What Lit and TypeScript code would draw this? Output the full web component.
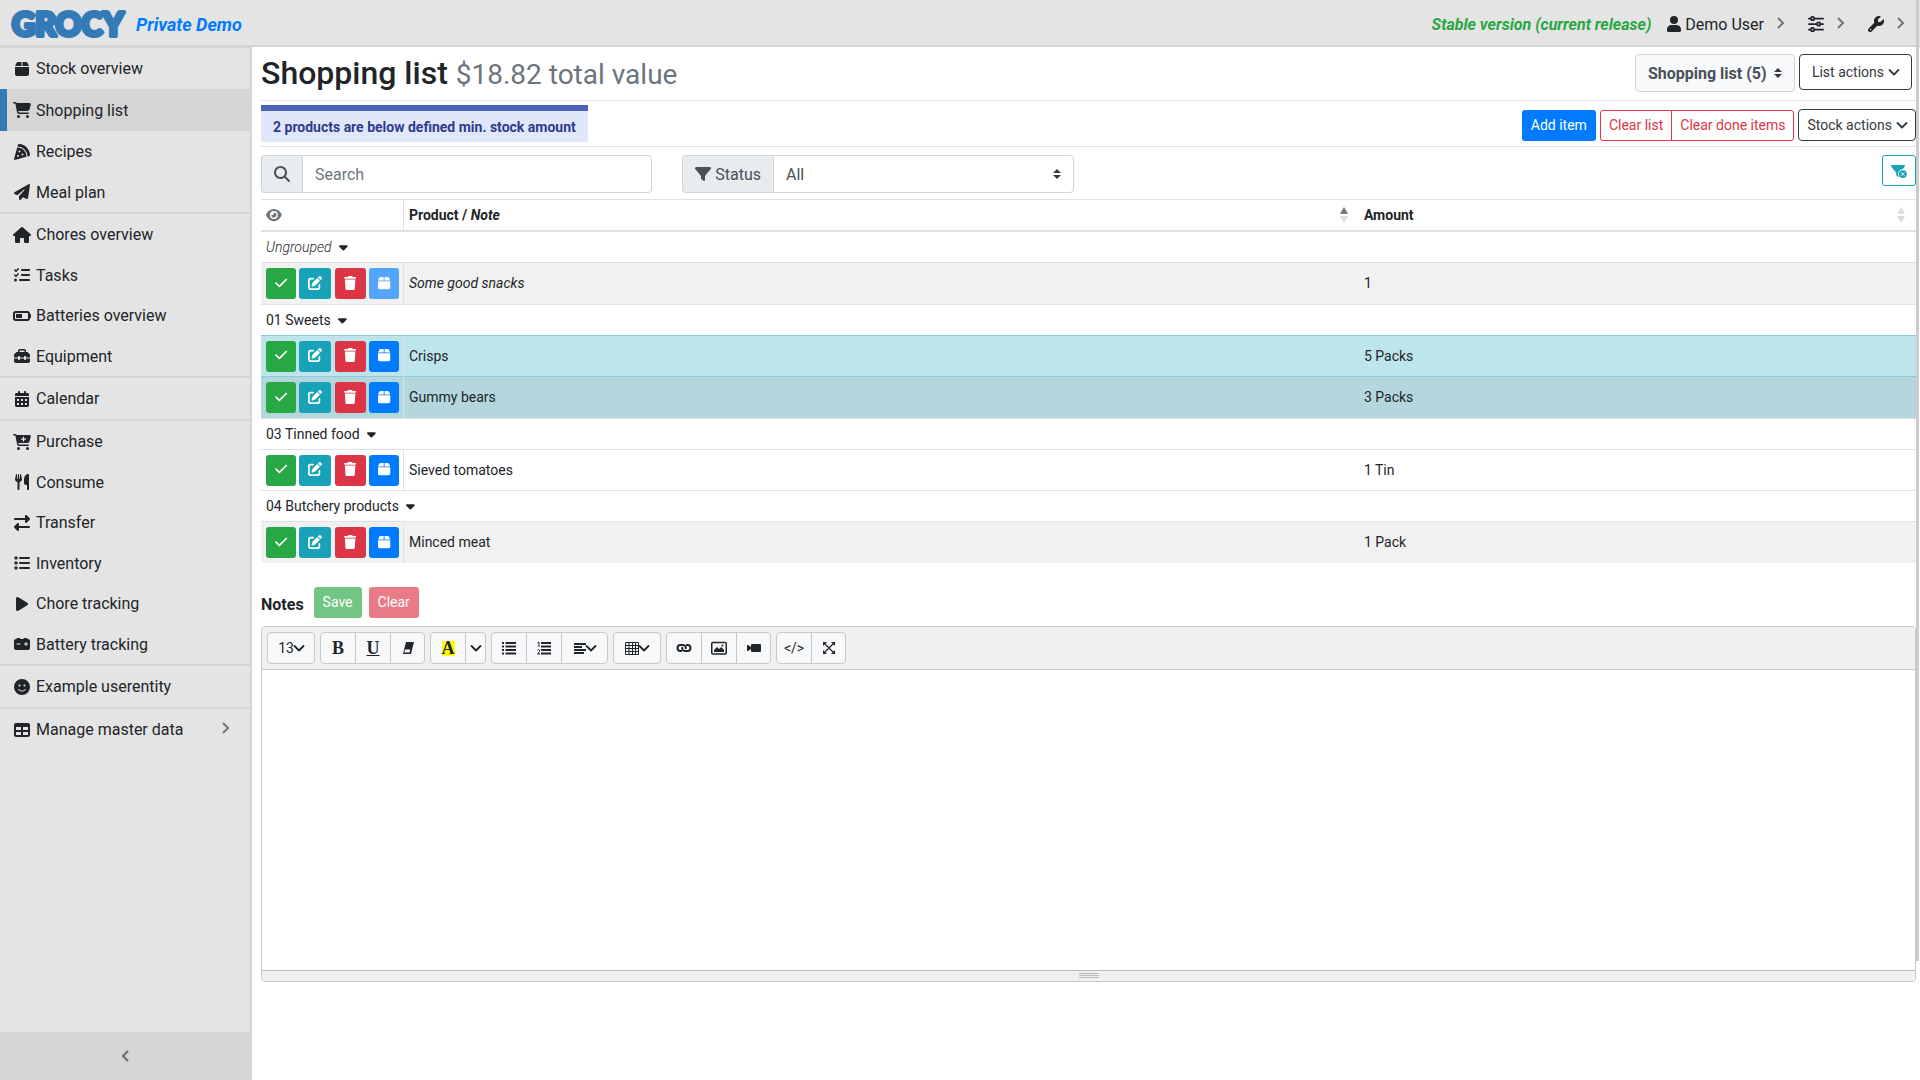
import { LitElement, html, css, svg, nothing } from "lit";
import type { SVGTemplateResult } from "lit";
import { customElement, property } from "lit/decorators.js";
import { classMap } from "lit/directives/class-map.js";

interface Icon {
  w: number;
  h?: number;
  body: SVGTemplateResult;
}

const CART =
  "M0 24C0 10.7 10.7 0 24 0H69.5c22 0 41.5 12.8 50.6 32h411c26.3 0 45.5 25 38.6 50.4l-41 152.3c-8.5 31.4-37 53.3-69.5 53.3H170.7l5.4 28.5c2.2 11.3 12.1 19.5 23.6 19.5H488c13.3 0 24 10.7 24 24s-10.7 24-24 24H199.7c-34.6 0-64.3-24.6-70.7-58.5L77.4 54.5c-.7-3.8-4-6.5-7.9-6.5H24C10.7 48 0 37.3 0 24zM128 464a48 48 0 1 1 96 0 48 48 0 1 1 -96 0zm336-48a48 48 0 1 1 0 96 48 48 0 1 1 0-96z";
const FILTER =
  "M3.9 54.9C10.5 40.9 24.5 32 40 32H472c15.5 0 29.5 8.9 36.1 22.9s4.6 30.5-5.2 42.5L320 320.9V448c0 12.1-6.8 23.2-17.7 28.6s-23.8 4.3-33.5-3l-64-48c-8.1-6-12.8-15.5-12.8-25.6V320.9L9 97.3C-.7 85.4-2.8 68.8 3.9 54.9z";

const ICONS: Record<string, Icon> = {
  box: {
    w: 448,
    body: svg`<path d="M50.7 58.5L0 160H208V32H93.7C75.5 32 58.9 42.3 50.7 58.5zM240 160H448L397.3 58.5C389.2 42.3 372.5 32 354.3 32H240V160zm208 32H0V416c0 35.3 28.7 64 64 64H384c35.3 0 64-28.7 64-64V192z"/>`,
  },
  cart: { w: 576, body: svg`<path d=${CART} />` },
  cartPlus: {
    w: 576,
    body: svg`<path fill-rule="evenodd" d=${CART + "M252 160c0 11 9 20 20 20h44v44c0 11 9 20 20 20s20-9 20-20V180h44c11 0 20-9 20-20s-9-20-20-20H356V96c0-11-9-20-20-20s-20 9-20 20v44H272c-11 0-20 9-20 20z"} />`,
  },
  pizza: {
    w: 512,
    body: svg`<path fill-rule="evenodd" d="M169.7 .9c-22.8-1.6-41.9 14-47.5 34.7L110.4 80c.5 0 1.1 0 1.6 0c176.7 0 320 143.3 320 320c0 .5 0 1.1 0 1.6l44.4-11.8c20.8-5.5 36.3-24.7 34.7-47.5C498.5 159.5 352.5 13.5 169.7 .9zM399.8 410.2c.1-3.4 .2-6.8 .2-10.2c0-159.1-128.9-288-288-288c-3.4 0-6.8 .1-10.2 .2L.5 491.9c-1.5 5.5 .1 11.4 4.1 15.4s9.9 5.6 15.4 4.1L399.8 410.2zM176 208a32 32 0 1 1 0 64 32 32 0 1 1 0-64zm64 128a32 32 0 1 1 64 0 32 32 0 1 1 -64 0zM96 384a32 32 0 1 1 64 0 32 32 0 1 1 -64 0z"/>`,
  },
  plane: {
    w: 512,
    body: svg`<path d="M498.1 5.6c10.1 7 15.4 19.1 13.5 31.2l-64 416c-1.5 9.7-7.4 18.2-16 23s-18.9 5.4-28 1.6L284 427.7l-68.5 74.1c-8.9 9.7-22.9 12.9-35.2 8.1S160 493.2 160 480V396.4c0-4 1.5-7.8 4.2-10.7L331.8 202.8c5.8-6.3 5.6-16-.4-22s-15.7-6.4-22-.7L106 360.8 17.7 316.6C7.1 311.3 .3 300.7 0 288.9s5.9-22.8 16.1-28.7l448-256c10.7-6.1 23.9-5.5 34 1.4z"/>`,
  },
  house: {
    w: 576,
    body: svg`<path d="M575.8 255.5c0 18-15 32.1-32 32.1h-32l.7 160.2c0 2.7-.2 5.4-.5 8.1V472c0 22.1-17.9 40-40 40H456c-1.1 0-2.2 0-3.3-.1c-1.4 .1-2.8 .1-4.2 .1H416 392c-22.1 0-40-17.9-40-40V448 384c0-17.7-14.3-32-32-32H256c-17.7 0-32 14.3-32 32v64 24c0 22.1-17.9 40-40 40H160 128.1c-1.5 0-3-.1-4.5-.2c-1.2 .1-2.4 .2-3.6 .2H104c-22.1 0-40-17.9-40-40V360c0-.9 0-1.9 .1-2.8V287.6H32c-18 0-32-14-32-32.1c0-9 3-17 10-24L266.4 8c7-7 15-8 22-8s15 2 21 7L564.8 231.5c8 7 12 15 11 24z"/>`,
  },
  tasks: {
    w: 512,
    body: svg`<path d="M152.1 38.2c9.9 8.9 10.7 24 1.8 33.9l-72 80c-4.4 4.9-10.6 7.8-17.2 7.9s-12.9-2.4-17.6-7L7 113C-2.3 103.6-2.3 88.4 7 79s24.6-9.4 33.9 0l22.1 22.1 55.1-61.2c8.9-9.9 24-10.7 33.9-1.8zm0 160c9.9 8.9 10.7 24 1.8 33.9l-72 80c-4.4 4.9-10.6 7.8-17.2 7.9s-12.9-2.4-17.6-7L7 273c-9.4-9.4-9.4-24.6 0-33.9s24.6-9.4 33.9 0l22.1 22.1 55.1-61.2c8.9-9.9 24-10.7 33.9-1.8zM224 96c0-17.7 14.3-32 32-32H480c17.7 0 32 14.3 32 32s-14.3 32-32 32H256c-17.7 0-32-14.3-32-32zm0 160c0-17.7 14.3-32 32-32H480c17.7 0 32 14.3 32 32s-14.3 32-32 32H256c-17.7 0-32-14.3-32-32zM160 416c0-17.7 14.3-32 32-32H480c17.7 0 32 14.3 32 32s-14.3 32-32 32H192c-17.7 0-32-14.3-32-32zM48 368a48 48 0 1 1 0 96 48 48 0 1 1 0-96z"/>`,
  },
  batteryHalf: {
    w: 576,
    body: svg`<path fill-rule="evenodd" d="M464 160c8.8 0 16 7.2 16 16V336c0 8.8-7.2 16-16 16H80c-8.8 0-16-7.2-16-16V176c0-8.8 7.2-16 16-16H464zM80 96C35.8 96 0 131.8 0 176V336c0 44.2 35.8 80 80 80H464c44.2 0 80-35.8 80-80V320c17.7 0 32-14.3 32-32V224c0-17.7-14.3-32-32-32V176c0-44.2-35.8-80-80-80H80zm208 96H96V320H288V192z"/>`,
  },
  toolbox: {
    w: 512,
    body: svg`<path d="M176 88v40H336V88c0-4.4-3.6-8-8-8H184c-4.4 0-8 3.6-8 8zm-48 40V88c0-30.9 25.1-56 56-56H328c30.9 0 56 25.1 56 56v40h28.1c12.7 0 24.9 5.1 33.9 14.1l51.9 51.9c9 9 14.1 21.2 14.1 33.9V304H384V288c0-17.7-14.3-32-32-32s-32 14.3-32 32v16H192V288c0-17.7-14.3-32-32-32s-32 14.3-32 32v16H0V227.9c0-12.7 5.1-24.9 14.1-33.9l51.9-51.9c9-9 21.2-14.1 33.9-14.1H128zM0 416V336H128v16c0 17.7 14.3 32 32 32s32-14.3 32-32V336H320v16c0 17.7 14.3 32 32 32s32-14.3 32-32V336H512v80c0 35.3-28.7 64-64 64H64c-35.3 0-64-28.7-64-64z"/>`,
  },
  calendar: {
    w: 448,
    body: svg`<path fill-rule="evenodd" d="M128 0c17.7 0 32 14.3 32 32V64H288V32c0-17.7 14.3-32 32-32s32 14.3 32 32V64h48c26.5 0 48 21.5 48 48v48H0V112C0 85.5 21.5 64 48 64H96V32c0-17.7 14.3-32 32-32zM0 192H448V464c0 26.5-21.5 48-48 48H48c-26.5 0-48-21.5-48-48V192zM64 256v64h64v-64zM192 256v64h64v-64zM320 256v64h64v-64zM64 384v64h64v-64zM192 384v64h64v-64zM320 384v64h64v-64z"/>`,
  },
  utensils: {
    w: 448,
    body: svg`<path d="M416 0C400 0 288 32 288 176V288c0 35.3 28.7 64 64 64h32V480c0 17.7 14.3 32 32 32s32-14.3 32-32V352 240 32c0-17.7-14.3-32-32-32zM64 16C64 7.8 57.9 1 49.7 .1S34.2 4.6 32.4 12.5L2.1 148.8C.7 155.1 0 161.5 0 167.9c0 45.9 35.1 83.6 80 87.7V480c0 17.7 14.3 32 32 32s32-14.3 32-32V255.6c44.9-4.1 80-41.8 80-87.7c0-6.4-.7-12.8-2.1-19.1L191.6 12.5c-1.8-8-9.3-13.3-17.4-12.4S160 7.8 160 16V150.2c0 5.4-4.4 9.8-9.8 9.8c-5.1 0-9.3-3.9-9.8-9L127.9 14.6C127.2 6.3 120.3 0 112 0s-15.2 6.3-15.9 14.6L83.7 151c-.5 5.1-4.7 9-9.8 9c-5.4 0-9.8-4.4-9.8-9.8V16z"/>`,
  },
  transfer: {
    w: 512,
    body: svg`<path d="M32 96l320 0V32c0-12.9 7.8-24.6 19.8-29.6s25.7-2.2 34.9 6.9l96 96c6 6 9.4 14.1 9.4 22.6s-3.4 16.6-9.4 22.6l-96 96c-9.2 9.2-22.9 11.9-34.9 6.9s-19.8-16.6-19.8-29.6V160L32 160c-17.7 0-32-14.3-32-32s14.3-32 32-32zM480 352c17.7 0 32 14.3 32 32s-14.3 32-32 32H160v64c0 12.9-7.8 24.6-19.8 29.6s-25.7 2.2-34.9-6.9l-96-96c-6-6-9.4-14.1-9.4-22.6s3.4-16.6 9.4-22.6l96-96c9.2-9.2 22.9-11.9 34.9-6.9s19.8 16.6 19.8 29.6l0 64H480z"/>`,
  },
  list: {
    w: 512,
    body: svg`<rect x="16" y="48" width="96" height="96" rx="24"/><rect x="16" y="208" width="96" height="96" rx="24"/><rect x="16" y="368" width="96" height="96" rx="24"/><rect x="160" y="64" width="352" height="64" rx="32"/><rect x="160" y="224" width="352" height="64" rx="32"/><rect x="160" y="384" width="352" height="64" rx="32"/>`,
  },
  play: {
    w: 384,
    body: svg`<path d="M73 39c-14.8-9.1-33.4-9.4-48.5-.9S0 62.6 0 80V432c0 17.4 9.4 33.4 24.5 41.9s33.7 8.1 48.5-.9L361 297c14.3-8.7 23-24.2 23-41s-8.7-32.2-23-41L73 39z"/>`,
  },
  carBattery: {
    w: 512,
    body: svg`<path fill-rule="evenodd" d="M80 96c0-17.700 14.300-32 32-32h64c17.700 0 32 14.300 32 32h96c0-17.700 14.300-32 32-32h64c17.700 0 32 14.300 32 32h16c35.300 0 64 28.700 64 64V384c0 35.300-28.700 64-64 64H64c-35.300 0-64-28.700-64-64V160c0-35.300 28.700-64 64-64H80zM368 192v48h-48v32h48v48h32v-48h48v-32h-48v-48zM80 240v32h128v-32z"/>`,
  },
  smile: {
    w: 512,
    body: svg`<path fill-rule="evenodd" d="M256 512A256 256 0 1 0 256 0a256 256 0 1 0 0 512zM164.100 325.500C182 346.200 212.600 368 256 368s74-21.800 91.900-42.500c5.800-6.700 15.900-7.400 22.600-1.600s7.400 15.900 1.600 22.600C349.800 372.100 311.100 400 256 400s-93.800-27.900-116.100-53.500c-5.800-6.700-5.100-16.800 1.600-22.600s16.800-5.100 22.600 1.600zM144 208a32 32 0 1 1 64 0 32 32 0 1 1 -64 0zm192-32a32 32 0 1 1 0 64 32 32 0 1 1 0-64z"/>`,
  },
  table: {
    w: 512,
    body: svg`<path fill-rule="evenodd" d="M64 32H448c35.300 0 64 28.700 64 64V416c0 35.300-28.700 64-64 64H64c-35.300 0-64-28.700-64-64V96C0 60.700 28.700 32 64 32zM64 160V256H224V160zM288 160V256H448V160zM64 320V416H224V320zM288 320V416H448V320z"/>`,
  },
  user: {
    w: 448,
    body: svg`<path d="M224 256A128 128 0 1 0 224 0a128 128 0 1 0 0 256zM150 288C60 288 0 340 0 420V464c0 26.500 21.500 48 48 48H400c26.500 0 48-21.500 48-48V420c0-80-60-132-150-132z"/>`,
  },
  sliders: {
    w: 512,
    body: svg`<g fill="none" stroke="currentColor" stroke-width="56" stroke-linecap="round"><path d="M28 80H72M224 80H484M28 256H262M424 256H484M28 432H72M224 432H484"/><circle cx="144" cy="80" r="54"/><circle cx="342" cy="256" r="54"/><circle cx="144" cy="432" r="54"/></g>`,
  },
  wrench: {
    w: 512,
    body: svg`<path fill-rule="evenodd" d="M352 320c88.400 0 160-71.600 160-160c0-15.300-2.200-30.100-6.200-44.200c-3.100-10.800-16.400-13.200-24.300-5.300l-76.800 76.800c-3 3-7.100 4.700-11.300 4.700H336c-8.800 0-16-7.200-16-16V118.600c0-4.200 1.700-8.300 4.700-11.300l76.800-76.800c7.900-7.900 5.400-21.200-5.300-24.300C382.100 2.200 367.300 0 352 0C263.600 0 192 71.600 192 160c0 19.100 3.400 37.500 9.500 54.500L19.900 396.100C7.200 408.800 0 426.100 0 444.100C0 481.600 30.400 512 67.900 512c18 0 35.300-7.200 48-19.900L297.500 310.500c17 6.200 35.400 9.500 54.500 9.500zM80 408a24 24 0 1 1 0 48 24 24 0 1 1 0-48z"/>`,
  },
  search: {
    w: 512,
    body: svg`<path fill-rule="evenodd" d="M416 208c0 45.900-14.900 88.300-40 122.700L502.600 457.400c12.500 12.500 12.500 32.800 0 45.300s-32.800 12.500-45.300 0L330.700 376c-34.400 25.200-76.800 40-122.700 40C93.100 416 0 322.900 0 208S93.100 0 208 0S416 93.100 416 208zM208 352a144 144 0 1 0 0-288 144 144 0 1 0 0 288z"/>`,
  },
  eye: {
    w: 576,
    body: svg`<path fill-rule="evenodd" d="M288 32c-80.800 0-145.500 36.800-192.600 80.600C48.600 156 17.300 208 2.500 243.700c-3.300 7.900-3.300 16.700 0 24.600C17.300 304 48.600 356 95.400 399.400C142.500 443.200 207.200 480 288 480s145.500-36.800 192.600-80.600c46.800-43.500 78.100-95.400 93-131.100c3.300-7.900 3.300-16.700 0-24.600c-14.900-35.700-46.200-87.700-93-131.100C433.500 68.800 368.800 32 288 32zM144 256a144 144 0 1 1 288 0 144 144 0 1 1 -288 0zm144-64c0 35.300-28.700 64-64 64c-7.100 0-13.900-1.200-20.300-3.300c-5.500-1.800-11.900 1.600-11.700 7.400c.3 6.900 1.300 13.800 3.200 20.700c13.700 51.200 66.400 81.600 117.600 67.900s81.600-66.400 67.900-117.600c-11.100-41.500-47.800-69.400-88.600-71.100c-5.800-.2-9.200 6.100-7.400 11.700c2.100 6.400 3.300 13.200 3.300 20.300z"/>`,
  },
  filter: { w: 512, body: svg`<path d=${FILTER} />` },
  filterClear: {
    w: 576,
    body: svg`<path d=${FILTER} /><circle cx="432" cy="368" r="176" fill="#fff"/><circle cx="432" cy="368" r="144"/><path d="M382 318l100 100M482 318l-100 100" stroke="#fff" stroke-width="34" stroke-linecap="round"/>`,
  },
  check: {
    w: 448,
    body: svg`<path d="M438.600 105.400c12.500 12.500 12.500 32.800 0 45.300l-256 256c-12.500 12.500-32.800 12.500-45.300 0l-128-128c-12.500-12.500-12.500-32.800 0-45.300s32.800-12.500 45.300 0L160 338.700 393.400 105.400c12.500-12.500 32.800-12.500 45.300 0z"/>`,
  },
  edit: {
    w: 512,
    body: svg`<path d="M471.600 21.700c-21.900-21.900-57.300-21.900-79.200 0L362.300 51.700l97.900 97.900 30.100-30.100c21.900-21.900 21.900-57.300 0-79.200L471.600 21.700zm-299.200 220c-6.100 6.100-10.800 13.600-13.500 21.900l-29.600 88.800c-2.900 8.600-.6 18.100 5.800 24.600s15.900 8.700 24.600 5.800l88.800-29.600c8.200-2.700 15.700-7.400 21.900-13.500L437.700 172.300 339.700 74.300 172.400 241.700zM96 64C43 64 0 107 0 160V416c0 53 43 96 96 96H352c53 0 96-43 96-96V320c0-17.700-14.300-32-32-32s-32 14.300-32 32v96c0 17.700-14.300 32-32 32H96c-17.700 0-32-14.300-32-32V160c0-17.700 14.300-32 32-32h96c17.700 0 32-14.300 32-32s-14.300-32-32-32H96z"/>`,
  },
  trash: {
    w: 448,
    body: svg`<path d="M135.200 17.700L128 32H32C14.300 32 0 46.300 0 64S14.300 96 32 96H416c17.700 0 32-14.300 32-32s-14.300-32-32-32H320l-7.200-14.300C307.400 6.800 296.300 0 284.200 0H163.800c-12.100 0-23.200 6.800-28.600 17.700zM416 128H32L53.200 467c1.600 25.300 22.600 45 47.900 45H346.900c25.300 0 46.300-19.700 47.900-45L416 128z"/>`,
  },
  caretDown: {
    w: 320,
    body: svg`<path d="M137.400 374.600c12.500 12.500 32.800 12.500 45.300 0l128-128c9.200-9.200 11.900-22.900 6.900-34.900s-16.600-19.800-29.600-19.800L32 192c-12.900 0-24.600 7.800-29.600 19.800s-2.200 25.700 6.900 34.900l128 128z"/>`,
  },
  chevronRight: {
    w: 8,
    h: 14,
    body: svg`<path d="M1 2l5 5-5 5" fill="none" stroke="currentColor" stroke-width="2"/>`,
  },
  chevronLeft: {
    w: 8,
    h: 14,
    body: svg`<path d="M7 2L2 7l5 5" fill="none" stroke="currentColor" stroke-width="2"/>`,
  },
  chevronDown: {
    w: 10,
    h: 14,
    body: svg`<path d="M.5 5L5 9.500 9.500 5" fill="none" stroke="currentColor" stroke-width="1.800" stroke-linecap="round" stroke-linejoin="round"/>`,
  },
  eraser: {
    w: 14,
    h: 14,
    body: svg`<path fill-rule="evenodd" d="M5 1h8L10 13H2zM4 8.500L3.300 11.500h5.200l.8-3z"/>`,
  },
  ul: {
    w: 14,
    h: 14,
    body: svg`<path d="M0 1h2v2H0zM0 4.500h2v2H0zM0 8h2v2H0zM0 11.500h2v2H0zM3.500 1H14v2H3.500zM3.500 4.500H14v2H3.500zM3.500 8H14v2H3.500zM3.500 11.500H14v2H3.500z"/>`,
  },
  ol: {
    w: 14,
    h: 14,
    body: svg`<path d="M4 1h10v2H4zM4 4.500h10v2H4zM4 8h10v2H4zM4 11.500h10v2H4z"/><path d="M.5 2L2 1v5M.5 9q1-1 2 0t-2 4h2.500" fill="none" stroke="currentColor"/>`,
  },
  align: {
    w: 12,
    h: 14,
    body: svg`<path d="M0 2h12v2H0zM0 5h8v2H0zM0 8h12v2H0zM0 11h10v2H0z"/>`,
  },
  grid: {
    w: 14,
    h: 14,
    body: svg`<path d="M.5 1.500h13v12H.5zM.5 4.500h13M.5 7.500h13M.5 10.500h13M4 1.500v12M7.500 1.500v12M10.500 1.500v12" fill="none" stroke="currentColor"/>`,
  },
  link: {
    w: 16,
    h: 14,
    body: svg`<g fill="none" stroke="currentColor" stroke-width="2"><path d="M6 10H4.500a3 3 0 0 1 0-6H7a2.800 2.800 0 0 1 2.500 4"/><path d="M10 4h1.500a3 3 0 0 1 0 6H9a2.800 2.800 0 0 1-2.500-4"/></g>`,
  },
  picture: {
    w: 16,
    h: 14,
    body: svg`<rect x=".75" y="1.500" width="14.500" height="11.500" rx="1" fill="none" stroke="currentColor" stroke-width="1.500"/><path d="M3 11V9l3-3 2 2 2.500-2L13 9v2z"/><circle cx="11.500" cy="4.500" r="1"/>`,
  },
  video: {
    w: 16,
    h: 14,
    body: svg`<rect x="5" y="3" width="10" height="8" rx="1"/><path d="M1 4h1l3 2v2L2 10H1z"/>`,
  },
  expand: {
    w: 14,
    h: 14,
    body: svg`<path d="M1 1h4L1 5zM13 1v4L9 1zM1 13V9l4 4zM13 13H9l4-4z"/><path d="M2 2l10 10M12 2L2 12" stroke="currentColor" stroke-width="1.200"/>`,
  },
};

@customElement("app-icon")
export class AppIcon extends LitElement {
  @property() name = "";
  @property({ type: Number }) size = 16;

  static styles = css`
    :host {
      display: inline-flex;
      flex: none;
    }
    .glyph {
      display: block;
      fill: currentColor;
      overflow: visible;
    }
  `;

  render() {
    const icon = ICONS[this.name];
    if (!icon) return nothing;
    const h = icon.h ?? 512;
    return html`<svg class="glyph" aria-hidden="true" viewBox="0 0 ${icon.w} ${h}" height=${this.size} width=${(this.size * icon.w) / h}>${icon.body}</svg>`;
  }
}

interface NavItem {
  icon: string;
  label: string;
  active?: boolean;
  more?: boolean;
}

const NAV: NavItem[][] = [
  [
    { icon: "box", label: "Stock overview" },
    { icon: "cart", label: "Shopping list", active: true },
    { icon: "pizza", label: "Recipes" },
    { icon: "plane", label: "Meal plan" },
  ],
  [
    { icon: "house", label: "Chores overview" },
    { icon: "tasks", label: "Tasks" },
    { icon: "batteryHalf", label: "Batteries overview" },
    { icon: "toolbox", label: "Equipment" },
  ],
  [{ icon: "calendar", label: "Calendar" }],
  [
    { icon: "cartPlus", label: "Purchase" },
    { icon: "utensils", label: "Consume" },
    { icon: "transfer", label: "Transfer" },
    { icon: "list", label: "Inventory" },
    { icon: "play", label: "Chore tracking" },
    { icon: "carBattery", label: "Battery tracking" },
  ],
  [{ icon: "smile", label: "Example userentity" }],
  [{ icon: "table", label: "Manage master data", more: true }],
];

interface Item {
  name: string;
  amount: string;
  low?: boolean;
  shade?: boolean;
  note?: boolean;
}

const GROUPS: { label: string; note?: boolean; items: Item[] }[] = [
  { label: "Ungrouped", note: true, items: [{ name: "Some good snacks", amount: "1", note: true, shade: true }] },
  {
    label: "01 Sweets",
    items: [
      { name: "Crisps", amount: "5 Packs", low: true },
      { name: "Gummy bears", amount: "3 Packs", low: true, shade: true },
    ],
  },
  { label: "03 Tinned food", items: [{ name: "Sieved tomatoes", amount: "1 Tin" }] },
  { label: "04 Butchery products", items: [{ name: "Minced meat", amount: "1 Pack", shade: true }] },
];

const icon = (name: string, size = 16) => html`<app-icon name=${name} size=${size}></app-icon>`;

@customElement("app-root")
export class AppRoot extends LitElement {
  static styles = css`
    :host {
      display: block;
      font: 14px/21px Roboto, "Liberation Sans", sans-serif;
      color: #212529;
    }
    *,
    *::before,
    *::after {
      box-sizing: border-box;
    }
    button,
    input,
    select,
    textarea {
      font: inherit;
      color: inherit;
      margin: 0;
    }
    a {
      color: inherit;
      text-decoration: none;
    }
    .page {
      display: flex;
      flex-direction: column;
      min-height: 100vh;
      background: #fff;
    }
    .scroll-thumb {
      position: fixed;
      top: 0;
      right: 1px;
      width: 3px;
      height: 89vh;
      background: #ccc;
    }

    .topbar {
      display: flex;
      align-items: center;
      height: 47px;
      padding: 3px 15px 0 12px;
      background: #e4e4e4;
      border-bottom: 2px solid #d5d5d5;
      font-size: 16px;
    }
    .logo {
      display: block;
      overflow: visible;
      font: 900 32px Lato, sans-serif;
      fill: #337ab7;
      stroke: #337ab7;
      stroke-width: 4px;
      stroke-linejoin: round;
    }
    .demo {
      margin-left: 8px;
      font-size: 18px;
      font-weight: 700;
      font-style: italic;
      color: #007bff;
    }
    .topbar-end {
      display: flex;
      align-items: center;
      margin-left: auto;
    }
    .release {
      margin-right: 16px;
      font-weight: 700;
      font-style: italic;
      color: #28a745;
    }
    .menu {
      display: flex;
      align-items: center;
      gap: 13px;
      padding: 0;
      border: 0;
      background: none;
      margin-left: 23px;
    }
    .release + .menu {
      margin-left: 0;
    }
    .menu-label {
      display: flex;
      align-items: center;
      gap: 4px;
    }
    .more {
      color: #757575;
    }

    .body {
      display: flex;
      flex: 1;
    }
    .sidebar {
      display: flex;
      flex-direction: column;
      flex: none;
      width: 252px;
      background: #e4e4e4;
      border-top: 1px solid #d5d5d5;
      border-right: 2px solid #d5d5d5;
      font-size: 16px;
    }
    .nav-group {
      margin: 0;
      padding: 0;
      list-style: none;
    }
    .nav-group + .nav-group {
      border-top: 2px solid #d5d5d5;
    }
    .nav-link {
      display: flex;
      align-items: center;
      gap: 4px;
      height: 41px;
      padding: 0 20px 0 12px;
    }
    .nav-item:nth-child(even) .nav-link {
      height: 40px;
    }
    .nav-item .nav-link.active {
      height: 42px;
      padding-left: 5px;
      background: #d5d5d5;
      border-left: 7px solid #337ab7;
    }
    .nav-icon {
      display: flex;
      justify-content: center;
      flex: none;
      width: 20px;
    }
    .nav-link .more {
      margin-left: auto;
    }
    .collapse {
      display: flex;
      align-items: center;
      justify-content: center;
      height: 48px;
      margin-top: auto;
      padding: 0;
      border: 0;
      background: #d5d5d5;
      color: #6c6c6c;
    }

    .content {
      flex: 1;
      min-width: 0;
      padding: 0 4px 0 9px;
    }
    .title-row {
      display: flex;
      align-items: flex-start;
      gap: 4px;
      padding: 7px 4px 8px 0;
      border-bottom: 1px solid #dee2e6;
    }
    .title {
      margin: 0 auto 0 0;
      font-size: 32px;
      line-height: 38px;
      font-weight: 500;
    }
    .total {
      font-size: 28px;
      line-height: 28px;
      font-weight: 400;
      color: #6c757d;
    }
    .select {
      height: 38px;
      padding: 0 28px 0 12px;
      border: 1px solid #ced4da;
      border-radius: 4px;
      font-size: 16px;
      color: #495057;
      appearance: none;
      background: #fff
        url("data:image/svg+xml,%3csvg xmlns='http://www.w3.org/2000/svg' width='4' height='5' viewBox='0 0 4 5'%3e%3cpath fill='%23343a40' d='M2 0L0 2h4zm0 5L0 3h4z'/%3e%3c/svg%3e")
        no-repeat right 12px center / 8px 10px;
    }
    .list-select {
      width: 160px;
      font-weight: 700;
      background-color: #f8f9fa;
    }
    .btn {
      display: inline-flex;
      align-items: center;
      justify-content: center;
      gap: 5px;
      height: 31px;
      padding: 0 8px;
      border: 1px solid transparent;
      border-radius: 3px;
      color: #fff;
      background: none;
      white-space: nowrap;
    }
    .btn.dark {
      height: 32px;
      border-color: #343a40;
      color: #343a40;
      border-radius: 4px;
    }
    .btn.dark.wide {
      height: 36px;
      padding: 0 12px;
    }
    .btn.primary {
      background: #007bff;
    }
    .btn.success {
      background: #28a745;
    }
    .btn.info {
      background: #17a2b8;
    }
    .btn.danger {
      background: #dc3545;
    }
    .btn.outline-danger {
      border-color: #dc3545;
      color: #dc3545;
    }
    .btn.outline-info {
      border-color: #17a2b8;
      color: #17a2b8;
    }
    .btn:disabled {
      opacity: 0.65;
    }
    .joined {
      display: flex;
    }
    .joined .btn:first-child {
      border-radius: 3px 0 0 3px;
    }
    .joined .btn:last-child {
      margin-left: -1px;
      border-radius: 0 3px 3px 0;
    }

    .action-row {
      display: flex;
      align-items: flex-end;
      justify-content: space-between;
      padding: 4px 0;
      border-bottom: 1px solid #dee2e6;
    }
    .notice {
      height: 37px;
      padding: 6px 12px 4px;
      border: 0;
      border-top: 6px solid #4b63b5;
      background: #e1e7fa;
      color: #2e3a8c;
      font-weight: 700;
    }
    .actions {
      display: flex;
      align-items: flex-end;
      gap: 4px;
      padding-bottom: 1px;
    }

    .filters {
      display: grid;
      grid-template-columns: repeat(4, 1fr);
      gap: 30px;
      padding: 8px 0 6px;
      font-size: 16px;
    }
    .field {
      display: flex;
    }
    .addon {
      display: flex;
      align-items: center;
      gap: 4px;
      padding: 0 12px;
      border: 1px solid #ced4da;
      border-right: 0;
      border-radius: 4px 0 0 4px;
      background: #e9ecef;
      color: #495057;
    }
    .search {
      flex: 1;
      min-width: 0;
      height: 38px;
      padding: 0 12px;
      border: 1px solid #ced4da;
      border-radius: 0 4px 4px 0;
    }
    .search::placeholder {
      color: #6c757d;
      opacity: 1;
    }
    .field .select {
      flex: 1;
      min-width: 0;
      border-radius: 0 4px 4px 0;
    }
    .clear-filter {
      grid-column: 4;
      justify-self: end;
    }

    .table {
      width: 100%;
      border-collapse: separate;
      border-spacing: 0;
      table-layout: fixed;
    }
    .col-actions {
      width: 143px;
    }
    .col-product {
      width: 57.7%;
    }
    .table th,
    .table td {
      padding: 0 5px;
      text-align: left;
      border-top: 1px solid #dee2e6;
    }
    .table thead th {
      height: 33px;
      border-bottom: 2px solid #dee2e6;
    }
    .table tr > .first {
      border-right: 1px solid #dee2e6;
    }
    .head {
      display: flex;
      align-items: center;
      justify-content: space-between;
      padding-right: 6px;
    }
    .eye {
      display: flex;
      padding: 0;
      border: 0;
      background: none;
      color: #6c757d;
    }
    .sort {
      display: flex;
      flex-direction: column;
      gap: 2px;
    }
    .up,
    .down {
      width: 0;
      border: 4px solid transparent;
    }
    .up {
      border-top: 0;
      border-bottom: 7px solid #ddd;
    }
    .down {
      border-bottom: 0;
      border-top: 7px solid #ddd;
    }
    .asc .up {
      border-bottom-color: #777;
    }
    .group td {
      height: 31px;
    }
    .table tbody:nth-of-type(1) .group td {
      height: 30px;
      border-top: 0;
    }
    .group-toggle {
      display: flex;
      align-items: center;
      gap: 7px;
      padding: 0;
      border: 0;
      background: none;
    }
    .table .low td {
      background: #bee5eb;
      border-top-color: #86cfda;
    }
    .item td {
      height: 41px;
    }
    .shade td {
      height: 42px;
      background: #f1f1f1;
    }
    .table .low.shade td {
      background: #b3d7dd;
    }
    .group-toggle.light {
      font-weight: 300;
    }
    .note {
      font-style: italic;
    }
    .row-actions {
      display: flex;
      gap: 3px;
    }
    .row-actions .btn {
      padding-bottom: 2px;
    }
    .row-actions .btn.danger {
      margin-left: 1px;
    }

    .notes-head {
      display: flex;
      align-items: center;
      gap: 7px;
      padding: 24px 0 8px;
    }
    .notes-label {
      padding: 4px 3px 0 0;
      font-size: 16px;
      font-weight: 700;
    }
    .editor {
      border: 1px solid #c8c8c8;
      border-radius: 4px;
      overflow: hidden;
    }
    .toolbar {
      display: flex;
      align-items: center;
      gap: 5px;
      padding: 5px;
      background: #f0f0f0;
      border-bottom: 1px solid #c8c8c8;
    }
    .tools {
      display: flex;
      border: 1px solid #c8c8c8;
      border-radius: 4px;
      background: #f8f9fa;
      overflow: hidden;
    }
    .tool {
      display: flex;
      align-items: center;
      justify-content: center;
      width: 35px;
      height: 30px;
      padding: 0;
      border: 0;
      background: none;
    }
    .tool:first-child,
    .tool:last-child {
      width: 34px;
    }
    .tool + .tool {
      border-left: 1px solid #c8c8c8;
    }
    .tools .menu-tool {
      width: 46px;
    }
    .tools .split {
      width: 20px;
    }
    .tool.serif {
      font: 700 18px/18px "Liberation Serif", serif;
    }
    .underline {
      text-decoration: underline;
    }
    .marker {
      background: #ff0;
      line-height: 15px;
    }
    .editable {
      display: block;
      width: 100%;
      height: 300px;
      padding: 10px;
      border: 0;
      resize: none;
      outline: none;
      background: #fff;
    }
    .resize {
      display: flex;
      flex-direction: column;
      align-items: center;
      gap: 1px;
      height: 11px;
      padding-top: 2px;
      border-top: 1px solid #bbb;
      background: #f0f0f0;
    }
    .grip {
      width: 20px;
      height: 1px;
      background: #bbb;
    }
  `;

  private navItem(i: NavItem) {
    return html`<li class="nav-item">
      <a class=${classMap({ "nav-link": true, active: !!i.active })} href="#">
        <span class="nav-icon">${icon(i.icon)}</span>${i.label}
        ${i.more ? html`<span class="more">${icon("chevronRight", 14)}</span>` : nothing}
      </a>
    </li>`;
  }

  private item(i: Item) {
    return html`<tr class=${classMap({ item: true, low: !!i.low, shade: !!i.shade })}>
      <td class="first">
        <div class="row-actions">
          <button class="btn success" aria-label="Mark as done">${icon("check", 14)}</button>
          <button class="btn info" aria-label="Edit">${icon("edit", 14)}</button>
          <button class="btn danger" aria-label="Delete">${icon("trash", 14)}</button>
          <button class="btn primary" aria-label="Add to stock" ?disabled=${!!i.note}>${icon("box", 14)}</button>
        </div>
      </td>
      <td class=${classMap({ note: !!i.note })}>${i.name}</td>
      <td>${i.amount}</td>
    </tr>`;
  }

  render() {
    return html`<div class="page">
      <header class="topbar">
        <svg class="logo" width="116" height="30" role="img" aria-label="GROCY"><text x="0" y="27">GROCY</text></svg>
        <span class="demo">Private Demo</span>
        <div class="topbar-end">
          <span class="release">Stable version (current release)</span>
          <button class="menu">
            <span class="menu-label">${icon("user")}Demo User</span><span class="more">${icon("chevronRight", 14)}</span>
          </button>
          <button class="menu" aria-label="View settings">${icon("sliders")}<span class="more">${icon("chevronRight", 14)}</span></button>
          <button class="menu" aria-label="Settings">${icon("wrench")}<span class="more">${icon("chevronRight", 14)}</span></button>
        </div>
      </header>
      <div class="body">
        <nav class="sidebar" aria-label="Main">
          ${NAV.map((g) => html`<ul class="nav-group">${g.map((i) => this.navItem(i))}</ul>`)}
          <button class="collapse" aria-label="Collapse sidebar">${icon("chevronLeft", 14)}</button>
        </nav>
        <main class="content">
          <div class="title-row">
            <h2 class="title">Shopping list <span class="total">$18.82 total value</span></h2>
            <select class="select list-select" aria-label="Shopping list">
              <option>Shopping list (5)</option>
            </select>
            <button class="btn dark wide">List actions${icon("chevronDown", 14)}</button>
          </div>
          <div class="action-row">
            <button class="notice">2 products are below defined min. stock amount</button>
            <div class="actions">
              <button class="btn primary">Add item</button>
              <div class="joined">
                <button class="btn outline-danger">Clear list</button>
                <button class="btn outline-danger">Clear done items</button>
              </div>
              <button class="btn dark">Stock actions${icon("chevronDown", 14)}</button>
            </div>
          </div>
          <div class="filters">
            <div class="field">
              <label class="addon" for="search" aria-label="Search">${icon("search")}</label>
              <input class="search" id="search" type="text" placeholder="Search" />
            </div>
            <div class="field">
              <label class="addon" for="status">${icon("filter")}Status</label>
              <select class="select" id="status">
                <option>All</option>
              </select>
            </div>
            <button class="btn outline-info clear-filter" aria-label="Clear filter">${icon("filterClear", 14)}</button>
          </div>
          <table class="table">
            <colgroup>
              <col class="col-actions" />
              <col class="col-product" />
              <col />
            </colgroup>
            <thead>
              <tr>
                <th class="first"><button class="eye" aria-label="Table options">${icon("eye", 14)}</button></th>
                <th>
                  <div class="head asc">
                    <span>Product / <i>Note</i></span>
                    <span class="sort"><span class="up"></span><span class="down"></span></span>
                  </div>
                </th>
                <th>
                  <div class="head">
                    <span>Amount</span>
                    <span class="sort"><span class="up"></span><span class="down"></span></span>
                  </div>
                </th>
              </tr>
            </thead>
            ${GROUPS.map(
              (g) => html`<tbody>
                <tr class="group">
                  <td colspan="3">
                    <button class=${classMap({ "group-toggle": true, note: !!g.note, light: !!g.note })}>
                      ${g.label}${icon("caretDown", 14)}
                    </button>
                  </td>
                </tr>
                ${g.items.map((i) => this.item(i))}
              </tbody>`,
            )}
          </table>
          <div class="notes-head">
            <label class="notes-label" for="notes">Notes</label>
            <button class="btn success" disabled>Save</button>
            <button class="btn danger" disabled>Clear</button>
          </div>
          <div class="editor">
            <div class="toolbar" role="toolbar" aria-label="Formatting">
              <div class="tools"><button class="tool menu-tool">13${icon("chevronDown", 14)}</button></div>
              <div class="tools">
                <button class="tool serif">B</button>
                <button class="tool serif"><span class="underline">U</span></button>
                <button class="tool" aria-label="Remove formatting">${icon("eraser", 14)}</button>
              </div>
              <div class="tools">
                <button class="tool serif"><span class="marker">A</span></button>
                <button class="tool split" aria-label="More colors">${icon("chevronDown", 14)}</button>
              </div>
              <div class="tools">
                <button class="tool" aria-label="Unordered list">${icon("ul", 14)}</button>
                <button class="tool" aria-label="Ordered list">${icon("ol", 14)}</button>
                <button class="tool menu-tool" aria-label="Paragraph">${icon("align", 14)}${icon("chevronDown", 14)}</button>
              </div>
              <div class="tools">
                <button class="tool menu-tool" aria-label="Table">${icon("grid", 14)}${icon("chevronDown", 14)}</button>
              </div>
              <div class="tools">
                <button class="tool" aria-label="Link">${icon("link", 14)}</button>
                <button class="tool" aria-label="Picture">${icon("picture", 14)}</button>
                <button class="tool" aria-label="Video">${icon("video", 14)}</button>
              </div>
              <div class="tools">
                <button class="tool">&lt;/&gt;</button>
                <button class="tool" aria-label="Full screen">${icon("expand", 14)}</button>
              </div>
            </div>
            <textarea class="editable" id="notes"></textarea>
            <div class="resize"><span class="grip"></span><span class="grip"></span><span class="grip"></span></div>
          </div>
        </main>
      </div>
      <div class="scroll-thumb"></div>
    </div>`;
  }
}
